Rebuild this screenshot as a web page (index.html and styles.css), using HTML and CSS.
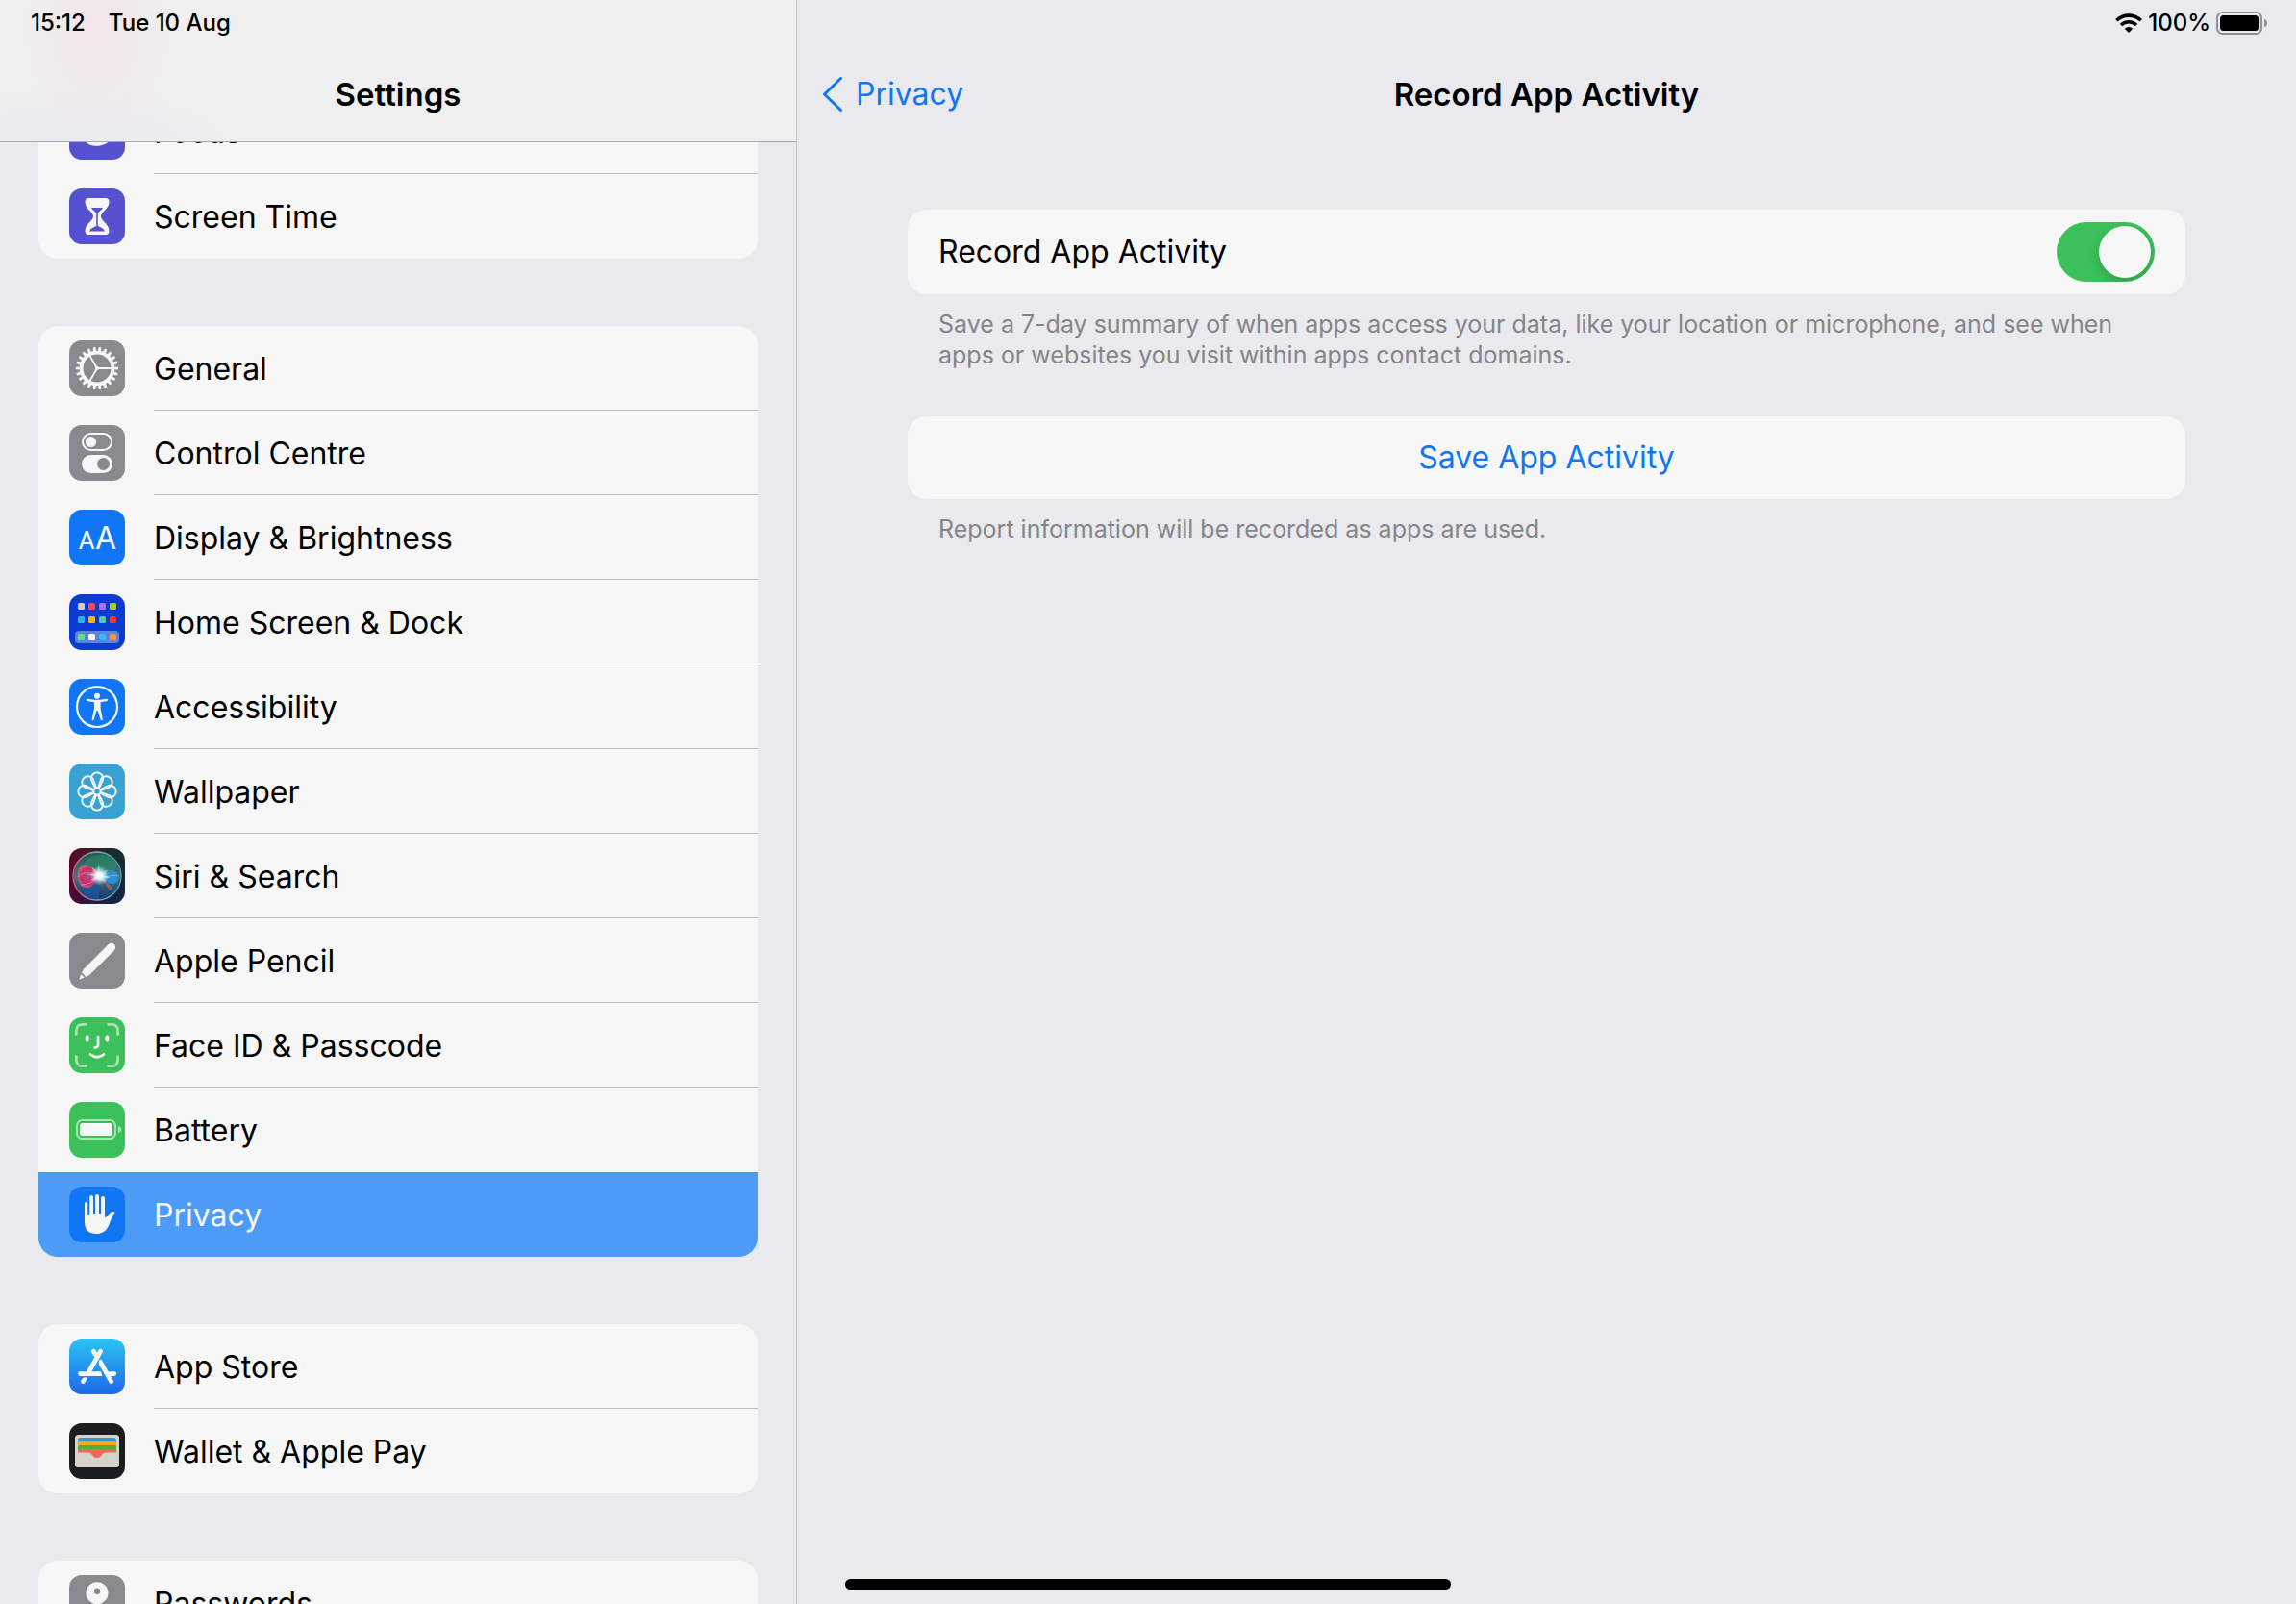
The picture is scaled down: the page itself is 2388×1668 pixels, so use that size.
FILE: index.html
```html
<!DOCTYPE html>
<html lang="en-GB">
<head>
<meta charset="utf-8">
<meta name="viewport" content="width=device-width, initial-scale=1">
<title>Settings – Record App Activity</title>
<link rel="stylesheet" href="styles.css">
</head>
<body>
<div class="screen">
  <aside class="sidebar">
    <header class="bar sidebar-bar">
      <div class="status"><time>15:12</time><time>Tue 10 Aug</time></div>
      <div class="titlebar"><h1 class="title">Settings</h1></div>
    </header>
    <nav class="list" aria-label="Settings">
      <ul class="group">
        <li><a class="row" href="#focus">
          <svg class="icon indigo" viewBox="0 0 58 58" aria-hidden="true"><path fill="#f6f6f6" d="M23 11C13 14 9 24 13 33C17 45 30 46 39 41C42.500 39 44.500 36.500 46 33C36 37 26 33 22 25C20 20 20.500 15 23 11Z"/></svg>
          <span class="label">Focus</span></a></li>
        <li><a class="row" href="#screen-time">
          <svg class="icon indigo" viewBox="0 0 58 58" aria-hidden="true"><path fill="#f6f6f6" d="M20 10H38Q41.500 10 41.500 14C41.500 21 33 24.500 33 29C33 33.500 41.500 37 41.500 44Q41.500 48 38 48H20Q16.500 48 16.500 44C16.500 37 25 33.500 25 29C25 24.500 16.500 21 16.500 14Q16.500 10 20 10Z"/><path fill="#5551cf" d="M23 20H35C34 22.500 31 23.500 29.800 25.500V39C33 40.500 36 41.500 37 44.500H21C22 41.500 25 40.500 28.200 39V25.500C27 23.500 24 22.500 23 20Z"/></svg>
          <span class="label">Screen Time</span></a></li>
      </ul>
      <ul class="group">
        <li><a class="row" href="#general">
          <svg class="icon grey" viewBox="0 0 58 58" aria-hidden="true"><g fill="none" stroke="#f6f6f6"><circle cx="29" cy="29" r="16.400" stroke-width="3.800"/><circle cx="29" cy="29" r="19" stroke-width="3" pathLength="44" stroke-dasharray="1.100 0.900" stroke-dashoffset="0.550"/><circle cx="29" cy="29" r="21" stroke-width="2.200" pathLength="44" stroke-dasharray="0.800 1.200" stroke-dashoffset="0.400"/><path stroke-width="1.900" d="M29 29H45M29 29L21 15.100M29 29L21 42.900"/></g><circle cx="29" cy="29" r="2" fill="#f6f6f6"/></svg>
          <span class="label">General</span></a></li>
        <li><a class="row" href="#control-centre">
          <svg class="icon grey" viewBox="0 0 58 58" aria-hidden="true"><rect x="14" y="9" width="30" height="17" rx="8.500" fill="none" stroke="#f6f6f6" stroke-width="2"/><circle cx="22.500" cy="17.500" r="5.600" fill="#f6f6f6"/><rect x="13" y="31" width="32" height="19" rx="9.500" fill="#f6f6f6"/><circle cx="35.500" cy="40.500" r="6.500" fill="#8a8a8e"/></svg>
          <span class="label">Control Centre</span></a></li>
        <li><a class="row" href="#display">
          <svg class="icon blue" viewBox="0 0 58 58" aria-hidden="true"><g class="glyph" text-anchor="middle"><text x="18" y="40.500" font-size="25">A</text><text x="38" y="40.500" font-size="32">A</text></g></svg>
          <span class="label">Display &amp; Brightness</span></a></li>
        <li><a class="row" href="#home-screen">
          <svg class="icon navy" viewBox="0 0 58 58" aria-hidden="true"><rect x="6" y="38" width="46" height="13" rx="4" fill="#5b83e2"/><g><rect x="9" y="9" width="7" height="7" rx="1.500" fill="#d0cfc9"/><rect x="20" y="9" width="7" height="7" rx="1.500" fill="#f44a60"/><rect x="31" y="9" width="7" height="7" rx="1.500" fill="#b36cf0"/><rect x="42" y="9" width="7" height="7" rx="1.500" fill="#a5c93a"/><rect x="9" y="23" width="7" height="7" rx="1.500" fill="#22b5f2"/><rect x="20" y="23" width="7" height="7" rx="1.500" fill="#f8b51c"/><rect x="31" y="23" width="7" height="7" rx="1.500" fill="#3fd0a4"/><rect x="42" y="23" width="7" height="7" rx="1.500" fill="#f03530"/><rect x="9" y="41" width="7" height="7" rx="1.500" fill="#5ce667"/><rect x="20" y="41" width="7" height="7" rx="1.500" fill="#f8f8f8"/><rect x="31" y="41" width="7" height="7" rx="1.500" fill="#2bc3ee"/><rect x="42" y="41" width="7" height="7" rx="1.500" fill="#f4983f"/></g></svg>
          <span class="label">Home Screen &amp; Dock</span></a></li>
        <li><a class="row" href="#accessibility">
          <svg class="icon blue" viewBox="0 0 58 58" aria-hidden="true"><circle cx="29" cy="29" r="21" fill="none" stroke="#f6f6f6" stroke-width="2.200"/><circle cx="29" cy="17.700" r="3" fill="#f6f6f6"/><path fill="#f6f6f6" d="M19 20.800L26 21.800H32L39 20.800Q40.300 20.800 40.200 22Q40.100 22.700 39.300 22.900L32.600 24.200V31L34.800 42Q34.900 43.200 33.900 43.300Q33 43.400 32.700 42.500L29.600 33H28.400L25.600 42.500Q25.300 43.400 24.300 43.300Q23.500 43.200 23.600 42L26 31V24.200L18.700 22.900Q17.900 22.700 17.900 22Q17.800 20.800 19 20.800Z"/></svg>
          <span class="label">Accessibility</span></a></li>
        <li><a class="row" href="#wallpaper">
          <svg class="icon cyan" viewBox="0 0 58 58" aria-hidden="true"><defs><path id="petal" d="M27.200 25.900L23.600 18.600A6.200 6.200 0 1 1 34.400 18.600L30.800 25.900"/></defs><g fill="none" stroke="#f6f6f6" stroke-width="1.800"><use href="#petal"/><use href="#petal" transform="rotate(45 29 29)"/><use href="#petal" transform="rotate(90 29 29)"/><use href="#petal" transform="rotate(135 29 29)"/><use href="#petal" transform="rotate(180 29 29)"/><use href="#petal" transform="rotate(225 29 29)"/><use href="#petal" transform="rotate(270 29 29)"/><use href="#petal" transform="rotate(315 29 29)"/><circle cx="29" cy="29" r="3.600"/></g></svg>
          <span class="label">Wallpaper</span></a></li>
        <li><a class="row" href="#siri">
          <svg class="icon siri" viewBox="0 0 58 58" aria-hidden="true">
            <defs>
              <radialGradient id="siri-core"><stop offset="0" stop-color="#fff"/><stop offset=".35" stop-color="#f2fdff" stop-opacity=".9"/><stop offset="1" stop-color="#9fe" stop-opacity="0"/></radialGradient>
              <radialGradient id="siri-pink"><stop offset="0" stop-color="#b04a80"/><stop offset=".75" stop-color="#cf2c62"/><stop offset="1" stop-color="#e8577f" stop-opacity=".8"/></radialGradient>
              <linearGradient id="siri-ring" x1="0" y1="0" x2="1" y2="0"><stop offset="0" stop-color="#d6567f"/><stop offset=".5" stop-color="#7fb3b5"/><stop offset="1" stop-color="#3fa0b4"/></linearGradient>
              <linearGradient id="siri-orb" x1="0" y1="0" x2="0" y2="1"><stop offset="0" stop-color="#1d5a4c"/><stop offset=".5" stop-color="#447480"/><stop offset="1" stop-color="#17356b"/></linearGradient>
            </defs>
            <circle cx="29" cy="29" r="25" fill="url(#siri-orb)" stroke="url(#siri-ring)" stroke-width="1.300"/>
            <ellipse cx="33" cy="17" rx="17" ry="10" fill="#2a8f6c" opacity=".55"/>
            <path fill="#1e56a0" opacity=".7" d="M31 31L12 44Q20 54 31 53Z"/>
            <path fill="#b05a72" opacity=".8" d="M32 29L42 44Q44 43 45 41Z"/>
            <path fill="url(#siri-pink)" d="M32 29C26 22 22 18 16 18C10 18 8 24 9 31C10 38 14 41 18 41C25 41 27 35 32 29Z"/>
            <path fill="#2f8fd4" d="M32 29C36 30 38 24 44 23.500C49 23.500 51 27 51 31C50.500 35 48 37 44 37C39 37 37 31 32 29Z"/>
            <path fill="none" stroke="#b9b4e0" stroke-width=".8" opacity=".8" d="M9 30C14 23 24 26 32 29C38 31 46 27 51 29M12 38C18 38 26 35 32 29"/>
            <path fill="#fff" opacity=".45" d="M32 28L31 16L29.500 25L23 19L27 27L17 27L27 29.500L22 34L30 32L38 35L36 31L43 31L36 28L41 22L34 26Z"/>
            <circle cx="31.500" cy="28.500" r="10" fill="url(#siri-core)"/>
          </svg>
          <span class="label">Siri &amp; Search</span></a></li>
        <li><a class="row" href="#pencil">
          <svg class="icon grey" viewBox="0 0 58 58" aria-hidden="true"><g fill="#f6f6f6" transform="translate(10.300 48.700) rotate(-45)"><path d="M0 0L5 -2.400Q6 0 5 2.400Z"/><path d="M6.800 -3L10.500 -4.300H47.500A4.300 4.300 0 0 1 47.500 4.300H10.500L6.800 3Q7.600 0 6.800 -3Z"/></g></svg>
          <span class="label">Apple Pencil</span></a></li>
        <li><a class="row" href="#face-id">
          <svg class="icon green" viewBox="0 0 58 58" aria-hidden="true"><g fill="none" stroke="#f6f6f6" stroke-linecap="round" stroke-width="2.700"><path opacity=".6" d="M7.400 17.500V14Q7.400 7.400 14 7.400H17.500M40.500 7.400H44Q50.600 7.400 50.600 14V17.500M50.600 40.500V44Q50.600 50.600 44 50.600H40.500M17.500 50.600H14Q7.400 50.600 7.400 44V40.500"/><path d="M22 38.500Q29 44 36 38.500M30 20V28.500Q30 31.500 26.500 31.500"/><path stroke-width="4" d="M18.700 20.500V23.500M39.300 20.500V23.500"/></g></svg>
          <span class="label">Face ID &amp; Passcode</span></a></li>
        <li><a class="row row-last" href="#battery">
          <svg class="icon green" viewBox="0 0 58 58" aria-hidden="true"><rect x="8" y="19" width="40" height="19" rx="5.500" fill="none" stroke="#f6f6f6" stroke-width="2" opacity=".6"/><rect x="11" y="22" width="34" height="13" rx="2.800" fill="#f6f6f6"/><path fill="#f6f6f6" opacity=".6" d="M51 25Q54 26 54 28.500Q54 31 51 32Z"/></svg>
          <span class="label">Battery</span></a></li>
        <li><a class="row row-last row-current" href="#privacy" aria-current="page">
          <svg class="icon blue" viewBox="0 0 58 58" aria-hidden="true"><g fill="#f6f6f6"><rect x="16" y="16" width="3.200" height="20" rx="1.600"/><rect x="21.200" y="9" width="3.800" height="24" rx="1.900"/><rect x="27" y="8" width="4" height="24" rx="2"/><rect x="33" y="10" width="4" height="24" rx="2"/><path d="M16 29H20L22 28H36L37.500 32.500L41.500 28.500C43 26.500 46 25.300 47.300 26.400C47.800 27.500 46 28.500 45 30.500C41.500 38 40.500 49 28.500 49C19 49 16 44 16 36Z"/></g></svg>
          <span class="label">Privacy</span></a></li>
      </ul>
      <ul class="group">
        <li><a class="row" href="#app-store">
          <svg class="icon store" viewBox="0 0 58 58" aria-hidden="true"><g fill="none" stroke="#f6f6f6" stroke-width="4.800" stroke-linecap="round"><path d="M32.600 13.200L20.500 34.500M25.300 13.200L27.500 17M43.700 44.700L33 25.500"/><path d="M11.500 36.600H31M42 36.600H46.800"/></g><path fill="#f6f6f6" d="M31 22.500L33.500 21.500L37 29L31.500 28Q30.500 25 31 22.500ZM28 34.200H33L34.500 39H28ZM14.500 40.800Q17 39.800 19 41L16.300 46Q15 47.500 13.200 46.700Q11.500 45.500 12.200 43.800Z"/></svg>
          <span class="label">App Store</span></a></li>
        <li><a class="row row-last" href="#wallet">
          <svg class="icon black" viewBox="0 0 58 58" aria-hidden="true"><rect x="6" y="12" width="46" height="34" rx="3.500" fill="#d5d2c9"/><rect x="9" y="15" width="40" height="12" rx="2.500" fill="#3b97c9"/><rect x="9" y="19" width="40" height="10" rx="2" fill="#fda81a"/><rect x="9" y="23" width="40" height="8" rx="2" fill="#4fb233"/><rect x="9" y="27" width="40" height="10" rx="2" fill="#ec6a59"/><path fill="#d5d2c9" d="M6 30.500H20C24 30.500 24 36 29 36C34 36 34 30.500 38 30.500H52V42.500Q52 46 48.500 46H9.500Q6 46 6 42.500Z"/></svg>
          <span class="label">Wallet &amp; Apple Pay</span></a></li>
      </ul>
      <ul class="group">
        <li><a class="row row-last" href="#passwords">
          <svg class="icon grey" viewBox="0 0 58 58" aria-hidden="true"><path fill="#f6f6f6" d="M25 27H33V48L29 52L25 48Z"/><circle cx="29" cy="18.700" r="11.500" fill="#f6f6f6"/><circle cx="29" cy="16.700" r="3.200" fill="#8a8a8e"/></svg>
          <span class="label">Passwords</span></a></li>
      </ul>
    </nav>
  </aside>

  <main class="detail">
    <header class="bar">
      <div class="status status-end">
        <svg class="wifi" viewBox="0 0 28 20" role="img" aria-label="Wi-Fi"><g fill="none" stroke="#000" stroke-width="3.600"><path d="M1.300 7.300A18.200 18.200 0 0 1 26.700 7.300"/><path d="M6 12A11.400 11.400 0 0 1 22 12"/></g><path d="M14 20L9.800 15.800A6 6 0 0 1 18.200 15.800Z"/></svg>
        <span class="percent">100%</span>
        <svg class="power" viewBox="0 0 53 24" role="img" aria-label="Battery full"><rect x="1" y="1" width="46" height="22" rx="5.500" fill="none" stroke="#909094" stroke-width="2"/><rect x="4" y="4" width="40" height="16" rx="3.500"/><path fill="#909094" d="M50 8Q53 9 53 12Q53 15 50 16Z"/></svg>
      </div>
      <div class="titlebar">
        <a class="back" href="#privacy"><svg class="chevron" viewBox="0 0 21 36" aria-hidden="true"><path d="M19.500 1.500L2.500 18L19.500 34.500" fill="none" stroke="currentColor" stroke-width="3" stroke-linecap="round" stroke-linejoin="round"/></svg>Privacy</a>
        <h2 class="title">Record App Activity</h2>
      </div>
    </header>
    <div class="content">
      <section class="section">
        <div class="card setting">
          <label for="record">Record App Activity</label>
          <input class="switch" id="record" type="checkbox" role="switch" checked>
        </div>
        <p class="note">Save a 7-day summary of when apps access your data, like your location or microphone, and see when apps or websites you visit within apps contact domains.</p>
      </section>
      <section class="section">
        <button class="card action" type="button">Save App Activity</button>
        <p class="note">Report information will be recorded as apps are used.</p>
      </section>
    </div>
  </main>
  <div class="home-bar"></div>
</div>
</body>
</html>
```
FILE: styles.css
```css
:root {
  --page: #e9e9ee;
  --card: #f6f6f6;
  --line: #bdbdbf;
  --blue: #1076f5;
  --green: #3cc15a;
  --muted: #858589;
}

* { box-sizing: border-box; }

body {
  margin: 0;
  background: var(--page);
  color: #000;
  font-family: Inter, "Liberation Sans", sans-serif;
  font-size: 32px;
  line-height: 40px;
}

a { color: inherit; text-decoration: none; }

.screen {
  position: relative;
  display: grid;
  grid-template-columns: 829px 1fr;
  height: 100vh;
  overflow: hidden;
}

/* Top bars */
.bar {
  display: flex;
  flex-direction: column;
  height: 148px;
}

.sidebar-bar {
  position: relative;
  z-index: 1;
  flex: none;
  border-bottom: 1px solid #a9a9ac;
  background:
    radial-gradient(ellipse 90px 120px at 100px 30px, #f3e6e9, transparent),
    radial-gradient(ellipse 180px 60px at 70px 148px, #e9e9f0, transparent),
    #efefef;
}

.status {
  display: flex;
  flex: none;
  align-items: center;
  gap: 24px;
  height: 48px;
  padding: 0 30px 0 32px;
  font-size: 24px;
  font-weight: 500;
  line-height: 32px;
}

.status-end { justify-content: flex-end; gap: 6px; }
.wifi { width: 28px; height: 20px; }
.power { width: 53px; height: 24px; }

.titlebar {
  display: grid;
  flex: none;
  grid-template-columns: 1fr auto 1fr;
  align-items: center;
  height: 100px;
  padding: 0 26px;
}

.title {
  grid-column: 2;
  margin: 0;
  font-size: 33px;
  font-weight: 600;
}

.back {
  display: flex;
  align-items: center;
  gap: 14px;
  color: var(--blue);
}

.chevron { width: 21px; height: 36px; }

/* Sidebar */
.sidebar {
  display: flex;
  flex-direction: column;
  min-height: 0;
  border-right: 1px solid #c4c4c8;
}

.list {
  display: flex;
  flex-direction: column;
  gap: 70px;
  min-height: 0;
  margin-top: -55px;
  padding: 0 40px;
  overflow: hidden;
}

.group {
  flex: none;
  margin: 0;
  padding: 0;
  border-radius: 20px;
  background: var(--card);
  list-style: none;
  overflow: hidden;
}

.row {
  display: flex;
  align-items: center;
  gap: 30px;
  height: 88px;
  padding-left: 32px;
}

.label {
  flex: 1;
  padding: 25px 0 22px;
  border-bottom: 1px solid var(--line);
}

.row-last .label,
.group li:last-child .label { border-color: transparent; }

.row-current { background: #4c9bf6; color: var(--card); }

.icon {
  flex: none;
  width: 58px;
  height: 58px;
  border-radius: 13px;
}

.indigo { background: #5551cf; }
.grey { background: #8a8a8e; }
.blue { background: var(--blue); }
.navy { background: #0a3bd2; }
.cyan { background: #38a3d3; }
.green { background: var(--green); }
.black { background: #1c1d1f; }
.store { background: linear-gradient(#2ac4f4, #1f68e8); }
.siri {
  background:
    radial-gradient(circle at 100% 0, #0a3530, transparent 70%),
    radial-gradient(circle at 100% 100%, #08284f, transparent 70%),
    linear-gradient(#5c0c26, #4c0a34);
}

.glyph { fill: var(--card); font-weight: 400; }

/* Detail pane */
.content {
  display: flex;
  flex-direction: column;
  gap: 48px;
  padding: 70px 115px 0;
}

.card {
  width: 100%;
  border-radius: 20px;
  background: var(--card);
}

.setting {
  display: flex;
  align-items: center;
  justify-content: space-between;
  height: 88px;
  padding: 0 32px;
}

.switch {
  width: 102px;
  height: 62px;
  margin: 0;
  padding: 4px;
  border-radius: 31px;
  background: #d9d9dd;
  overflow: hidden;
  appearance: none;
}

.switch::before {
  content: "";
  display: block;
  width: 54px;
  height: 54px;
  border-radius: 50%;
  background: var(--card);
  box-shadow: 0 4px 12px rgb(0 0 0 / 20%);
}

.switch:checked { background: var(--green); }
.switch:checked::before { margin-left: auto; }

.action {
  height: 86px;
  border: 0;
  color: var(--blue);
  font: inherit;
}

.note {
  margin: 0;
  padding: 15px 32px 0;
  color: var(--muted);
  font-size: 25px;
  line-height: 32px;
}

.home-bar {
  position: absolute;
  bottom: 15px;
  left: 50%;
  width: 630px;
  height: 11px;
  margin-left: -315px;
  border-radius: 6px;
  background: #000;
}
```
